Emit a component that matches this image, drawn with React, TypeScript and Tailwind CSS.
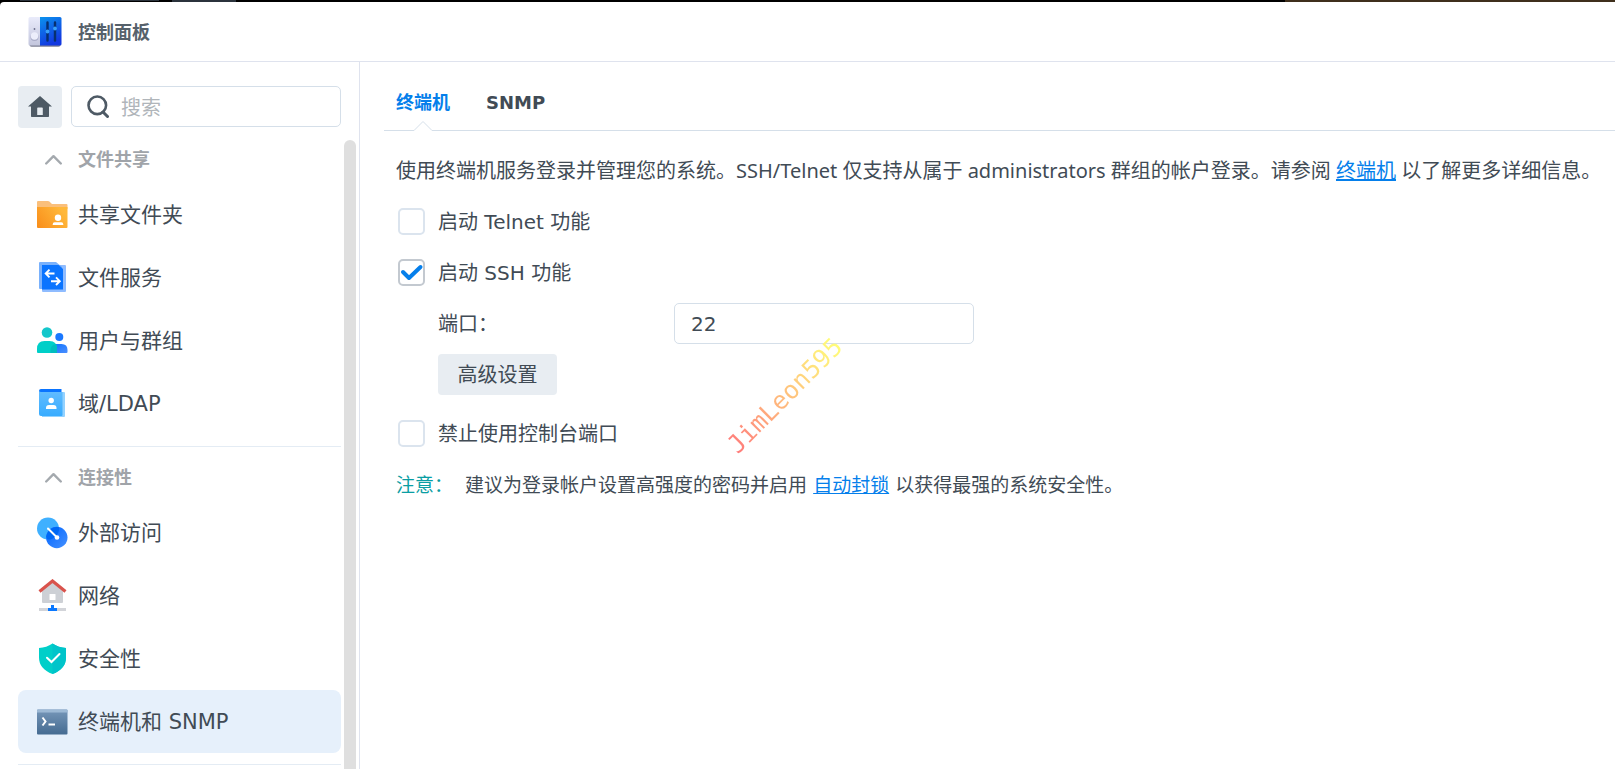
import type { ReactNode } from "react";

type NavItem = {
  label: string;
  icon: ReactNode;
  selected?: boolean;
};

type NavSection = {
  title: string;
  items: NavItem[];
};

function ControlPanelLogo() {
  return (
    <svg width="34" height="30" viewBox="0 0 34 30" aria-hidden>
      <defs>
        <linearGradient id="logo-blue" x1="0" y1="0" x2="0.4" y2="1">
          <stop offset="0" stopColor="#0b93ee" />
          <stop offset="1" stopColor="#1238e0" />
        </linearGradient>
        <linearGradient id="logo-grey" x1="0" y1="0" x2="0" y2="1">
          <stop offset="0" stopColor="#e9ebfb" />
          <stop offset="1" stopColor="#c3c6dd" />
        </linearGradient>
      </defs>
      <rect x="1.500" y="2" width="31" height="27.800" rx="2" fill="#5b5f78" opacity="0.800" />
      <path d="M2 0h10v28.500H2a1.500 1.500 0 0 1-1.500-1.500V1.500A1.500 1.500 0 0 1 2 0z" fill="url(#logo-grey)" />
      <path d="M12 0h20a1.500 1.500 0 0 1 1.500 1.500V27a1.500 1.500 0 0 1-1.500 1.500H12z" fill="url(#logo-blue)" />
      <circle cx="6.500" cy="12" r="0.900" fill="#6b6f8c" />
      <circle cx="6.500" cy="20" r="4" fill="#a9acc8" />
      <circle cx="6.500" cy="19" r="3.700" fill="#eceefb" />
      <path d="M19.500 5.500v18M27 5.500v18" stroke="#07306f" strokeWidth="2.400" strokeLinecap="round" />
      <circle cx="19.500" cy="14.500" r="1.900" fill="#3aa0f8" />
      <circle cx="27" cy="11.500" r="1.900" fill="#3aa0f8" />
    </svg>
  );
}

function HomeIcon() {
  return (
    <svg width="24" height="22" viewBox="0 0 24 22" fill="#4e5a65" aria-hidden>
      <path d="M12 0L0 10.500h3V20.300q0 .7.700.7h16.600q.7 0 .7-.7V10.500h3zM9.200 12.300q0-.8.800-.8h4q.8 0 .8.800V19H9.200z" fillRule="evenodd" />
    </svg>
  );
}

function SearchIcon() {
  return (
    <svg width="22" height="23" viewBox="0 0 22 23" fill="none" stroke="#4e5a65" aria-hidden>
      <circle cx="10.300" cy="10.300" r="8.800" strokeWidth="2.600" />
      <path d="M16 17l4.500 4.500" strokeWidth="3" strokeLinecap="round" />
    </svg>
  );
}

function Chevron() {
  return (
    <svg width="17" height="11" viewBox="0 0 17 11" fill="none" aria-hidden>
      <path d="M1.200 9.500l7.300-7.300 7.300 7.300" stroke="#a4a9ae" strokeWidth="2.400" strokeLinecap="round" strokeLinejoin="round" />
    </svg>
  );
}

function SharedFolderIcon() {
  return (
    <svg width="32" height="32" viewBox="0 0 32 32" aria-hidden>
      <defs>
        <linearGradient id="folder" x1="0" y1="1" x2="1" y2="0.5">
          <stop offset="0" stopColor="#f98d1a" />
          <stop offset="1" stopColor="#ffb83a" />
        </linearGradient>
      </defs>
      <path d="M1 3q0-1 1-1h10q.8 0 1.400.6L16 5h14.500q1 0 1 1v4H1z" fill="#fabf7b" />
      <path d="M1 8h30.500v20q0 1-1 1H2q-1 0-1-1z" fill="url(#folder)" />
      <circle cx="22" cy="18.700" r="3.200" fill="#fff" />
      <path d="M16.700 26v-.8q0-2 2-2h6.600q2 0 2 2V26z" fill="#fff" />
    </svg>
  );
}

function FileServicesIcon() {
  return (
    <svg width="32" height="32" viewBox="0 0 32 32" aria-hidden>
      <path d="M6 3h23q1 0 1 1v25q0 1-1 1H7q-1 0-1-1z" fill="#8fbcff" />
      <path d="M4 0h16l6 5v22H4q-1 0-1-1V1q0-1 1-1z" fill="#62a3fb" opacity="0.850" />
      <path d="M6 3h16.500L27 7v20.500H6z" fill="#0a74ff" />
      <path d="M18.500 11.500H10M13.500 7.700L9.700 11.500l3.800 3.800M15 19.200h8.500M20 15.400l3.800 3.800-3.800 3.800" fill="none" stroke="#fff" strokeWidth="1.900" />
    </svg>
  );
}

function UsersIcon() {
  return (
    <svg width="32" height="32" viewBox="0 0 32 32" aria-hidden>
      <defs>
        <linearGradient id="user-blue" x1="0" y1="0" x2="1" y2="1">
          <stop offset="0" stopColor="#0a70ff" />
          <stop offset="1" stopColor="#4b8fff" />
        </linearGradient>
      </defs>
      <circle cx="23.300" cy="12" r="4" fill="#1a78ff" />
      <path d="M14.500 28v-3q0-6 6-6h5q6 0 6 6v2q0 1-1 1z" fill="url(#user-blue)" />
      <circle cx="11" cy="7.500" r="5.300" fill="#14c7cb" />
      <path d="M1 27v-3q0-8 7.500-8h5q7.500 0 7.500 8v4H2q-1 0-1-1z" fill="#00cfc8" />
      <path d="M14.500 28v-3q0-5 5.500-6 1 2 1 5v4z" fill="#00bdbf" />
    </svg>
  );
}

function DomainIcon() {
  return (
    <svg width="32" height="32" viewBox="0 0 32 32" aria-hidden>
      <defs>
        <linearGradient id="book" x1="0" y1="0" x2="0" y2="1">
          <stop offset="0" stopColor="#62bcff" />
          <stop offset="1" stopColor="#38acff" />
        </linearGradient>
      </defs>
      <path d="M6 4h22q1 0 1 1v23q0 1-1 1H6z" fill="#93d2ff" />
      <path d="M5 1h20.500v6H3V3q0-2 2-2z" fill="#0a74ff" />
      <path d="M3 3q1 1 2 1h21.500v23q0 1-1 1H5q-2 0-2-2z" fill="url(#book)" />
      <circle cx="15.200" cy="12.500" r="2.700" fill="#fff" />
      <path d="M10 21v-1q0-3 3-3h4.500q3 0 3 3v1z" fill="#fff" />
    </svg>
  );
}

function ExternalAccessIcon() {
  return (
    <svg width="32" height="32" viewBox="0 0 32 32" aria-hidden>
      <defs>
        <linearGradient id="globe" x1="0" y1="0" x2="1" y2="1">
          <stop offset="0" stopColor="#0064ff" />
          <stop offset="1" stopColor="#4591ff" />
        </linearGradient>
      </defs>
      <circle cx="12" cy="11.500" r="11" fill="#3fb0ff" />
      <circle cx="20.800" cy="20.500" r="10.700" fill="url(#globe)" />
      <path d="M10.300 19.500a10.700 10.700 0 0 1 12.700-9.200 11 11 0 0 1-11.300 12.200 10 10 0 0 1-1.400-3z" fill="#0068f5" />
      <path d="M12 11.500l9 9" stroke="#fff" strokeWidth="2" strokeLinecap="round" />
      <circle cx="21" cy="20.500" r="2.300" fill="#fff" />
    </svg>
  );
}

function NetworkIcon() {
  return (
    <svg width="32" height="34" viewBox="0 0 32 34" aria-hidden>
      <path d="M16.500 3L27 11.500V23q0 1-1 1H7q-1 0-1-1V11.500z" fill="#cdd0d5" />
      <path d="M3.500 12.500L16.500 2l13 10.500" fill="none" stroke="#d9534c" strokeWidth="3.200" />
      <rect x="13.500" y="15" width="6" height="6" rx="0.500" fill="#fff" />
      <rect x="3" y="29" width="27" height="3" fill="#d2d4d9" />
      <path d="M15 26h3v3h3v3h-9v-3h3z" fill="#0a78ff" />
    </svg>
  );
}

function SecurityIcon() {
  return (
    <svg width="32" height="32" viewBox="0 0 32 32" aria-hidden>
      <path d="M16.500 .5q6 4.200 13.500 4.500v9.500q0 11.500-13.500 16.500Q3 26 3 14.500V5Q10.500 4.700 16.500 .5z" fill="#00cfc9" />
      <path d="M16.500 .5q6 4.200 13.500 4.500v9.500q0 11.500-13.500 16.500z" fill="#00c4ca" />
      <path d="M11 14.700l4.500 4.300 8-8" fill="none" stroke="#fff" strokeWidth="2" strokeLinecap="round" />
    </svg>
  );
}

function TerminalIcon() {
  return (
    <svg width="32" height="32" viewBox="0 0 32 32" aria-hidden>
      <defs>
        <linearGradient id="terminal" x1="0" y1="0" x2="0" y2="1">
          <stop offset="0" stopColor="#7797b9" />
          <stop offset="1" stopColor="#456b91" />
        </linearGradient>
      </defs>
      <rect x="1" y="3.500" width="30.500" height="25" rx="1" fill="url(#terminal)" />
      <path d="M2 3.500h28.500q1 0 1 1v2H1v-2q0-1 1-1z" fill="#9db9d5" />
      <path d="M6.500 11.500l3 4-3 4" fill="none" stroke="#fff" strokeWidth="2" />
      <path d="M12.500 18.500h6.500" stroke="#fff" strokeWidth="2" />
    </svg>
  );
}

const SECTIONS: NavSection[] = [
  {
    title: "文件共享",
    items: [
      { label: "共享文件夹", icon: <SharedFolderIcon /> },
      { label: "文件服务", icon: <FileServicesIcon /> },
      { label: "用户与群组", icon: <UsersIcon /> },
      { label: "域/LDAP", icon: <DomainIcon /> },
    ],
  },
  {
    title: "连接性",
    items: [
      { label: "外部访问", icon: <ExternalAccessIcon /> },
      { label: "网络", icon: <NetworkIcon /> },
      { label: "安全性", icon: <SecurityIcon /> },
      { label: "终端机和 SNMP", icon: <TerminalIcon />, selected: true },
    ],
  },
];

function Checkbox({ label, checked = false }: { label: string; checked?: boolean }) {
  return (
    <label className="flex h-[51px] items-center gap-[13px]">
      <span className="relative ml-0.5 flex">
        <input
          type="checkbox"
          defaultChecked={checked}
          className="peer h-[27px] w-[27px] appearance-none rounded-[5px] border-2 border-[#dbe4ee] bg-white checked:border-[#c3c9d0]"
        />
        <svg
          width="27"
          height="27"
          viewBox="0 0 27 27"
          fill="none"
          className="pointer-events-none absolute inset-0 hidden peer-checked:block"
          aria-hidden
        >
          <path d="M5 13l6 6L22.500 8" stroke="#057feb" strokeWidth="4" strokeLinecap="round" strokeLinejoin="round" />
        </svg>
      </span>
      {label}
    </label>
  );
}

function Sidebar() {
  return (
    <aside className="flex w-[360px] shrink-0 flex-col border-r border-[#dfe3ee] pl-[18px] pt-6">
      <div className="flex gap-[9px] pr-[18px]">
        <button
          type="button"
          aria-label="主页"
          className="flex h-[42px] w-11 items-center justify-center rounded bg-[#e8edf2]"
        >
          <HomeIcon />
        </button>
        <label className="flex h-[41px] min-w-0 flex-1 items-center gap-3 rounded-[5px] border border-[#d5dfe9] pl-[15px]">
          <SearchIcon />
          <input
            type="search"
            placeholder="搜索"
            aria-label="搜索"
            className="min-w-0 flex-1 pt-0.5 text-[20px] outline-none placeholder:text-[#b0b5ba]"
          />
        </label>
      </div>

      <div className="flex min-h-0 flex-1 gap-[3px] pr-[3px] pt-[7px]">
        <nav className="min-w-0 flex-1 overflow-hidden text-[21px]">
          {SECTIONS.map((section) => (
            <section key={section.title} className="mb-[11px] border-b border-[#e4ecf4] pb-[11px] last:mb-0 [&+section]:-mt-[5px]">
              <button
                type="button"
                className="flex h-12 w-full items-center gap-4 pl-[27px] text-[18px] font-bold text-[#a0a4a9]"
              >
                <Chevron />
                {section.title}
              </button>
              {section.items.map((item) => (
                <a
                  key={item.label}
                  href="#"
                  className={
                    item.selected
                      ? "flex h-[63px] items-center gap-[10px] rounded-lg bg-[#e6f0fb] pl-[18px]"
                      : "flex h-[63px] items-center gap-[10px] pl-[18px]"
                  }
                >
                  {item.icon}
                  <span className="pt-0.5">{item.label}</span>
                </a>
              ))}
            </section>
          ))}
        </nav>
        {/* Scrollbar */}
        <div className="mt-[5px] w-3 rounded-t-full bg-[#dfdfdf]" />
      </div>
    </aside>
  );
}

export default function App() {
  return (
    <div
      lang="zh-CN"
      className="flex h-screen flex-col overflow-hidden bg-black font-['DejaVu_Sans','Noto_Sans_CJK_SC',sans-serif] text-[#414b55]"
    >
      {/* Desktop showing above the window */}
      <div className="flex h-[2px] shrink-0">
        <div className="ml-5 h-px w-[139px] bg-[#2b333c]" />
        <div className="ml-[13px] w-16 bg-[#2b333c]" />
        <div className="ml-auto w-[330px] bg-[#3f2f1c]" />
      </div>

      <div className="flex min-h-0 flex-1 flex-col rounded-tl bg-white">
        <header className="flex h-[60px] shrink-0 items-center gap-4 border-b border-[#dfe3ee] pl-7">
          <ControlPanelLogo />
          <h1 className="pt-0.5 text-[18px] font-bold text-[#56616b]">控制面板</h1>
        </header>

        <div className="flex min-h-0 flex-1">
          <Sidebar />

          <main className="relative min-w-0 flex-1 pl-6 pt-4 text-[20px]">
            <div role="tablist" className="flex h-[53px] gap-9 border-b border-[#d5dfe9] pl-3 text-[18px] font-bold">
              <button type="button" role="tab" aria-selected="true" className="relative flex h-12 items-center text-[#057feb]">
                终端机
                <svg
                  width="18"
                  height="11"
                  viewBox="0 0 18 11"
                  className="absolute -bottom-[5px] left-1/2 -translate-x-1/2"
                  aria-hidden
                >
                  <path d="M0 10.500L9 1.500l9 9v.5H0z" fill="#fff" />
                  <path d="M0 10.500L9 1.500l9 9" fill="none" stroke="#d5dfe9" />
                </svg>
              </button>
              <button type="button" role="tab" aria-selected="false" className="flex h-12 items-center">
                SNMP
              </button>
            </div>

            <div className="pl-3 pt-[14px]">
              <p className="flex h-[51px] items-center whitespace-pre font-['Noto_Sans','Noto_Sans_CJK_SC',sans-serif]">
                使用终端机服务登录并管理您的系统。SSH/Telnet 仅支持从属于 administrators 群组的帐户登录。请参阅{" "}
                <a href="#" className="text-[#057feb] underline">终端机</a> 以了解更多详细信息。
              </p>
              <Checkbox label="启动 Telnet 功能" />
              <Checkbox label="启动 SSH 功能" checked />
              <div className="flex h-[51px] items-center pl-[42px]">
                <label htmlFor="port" className="w-[236px]">端口：</label>
                <input
                  id="port"
                  type="text"
                  defaultValue="22"
                  className="h-[41px] w-[300px] rounded-[5px] border border-[#d5dfe9] px-4 outline-none"
                />
              </div>
              <div className="flex h-[51px] items-center pl-[42px]">
                <button type="button" className="h-[41px] w-[119px] rounded bg-[#e8edf2]">
                  高级设置
                </button>
              </div>
              <div className="mt-2">
                <Checkbox label="禁止使用控制台端口" />
              </div>
              <p className="flex h-[51px] items-center whitespace-pre pt-0.5 text-[19px]">
                <span className="text-[#0a9ea3]">注意：</span>  建议为登录帐户设置高强度的密码并启用{" "}
                <a href="#" className="text-[#057feb] underline">自动封锁</a> 以获得最强的系统安全性。
              </p>
            </div>

            {/* Watermark */}
            <div className="pointer-events-none absolute left-[350px] top-[320px] -rotate-45 bg-linear-to-r from-[#ff7a7a] to-[#ffff7a] bg-clip-text font-['DejaVu_Sans_Mono',monospace] text-[25px] leading-7 text-transparent">
              JimLeon595
            </div>
          </main>
        </div>
      </div>
    </div>
  );
}
